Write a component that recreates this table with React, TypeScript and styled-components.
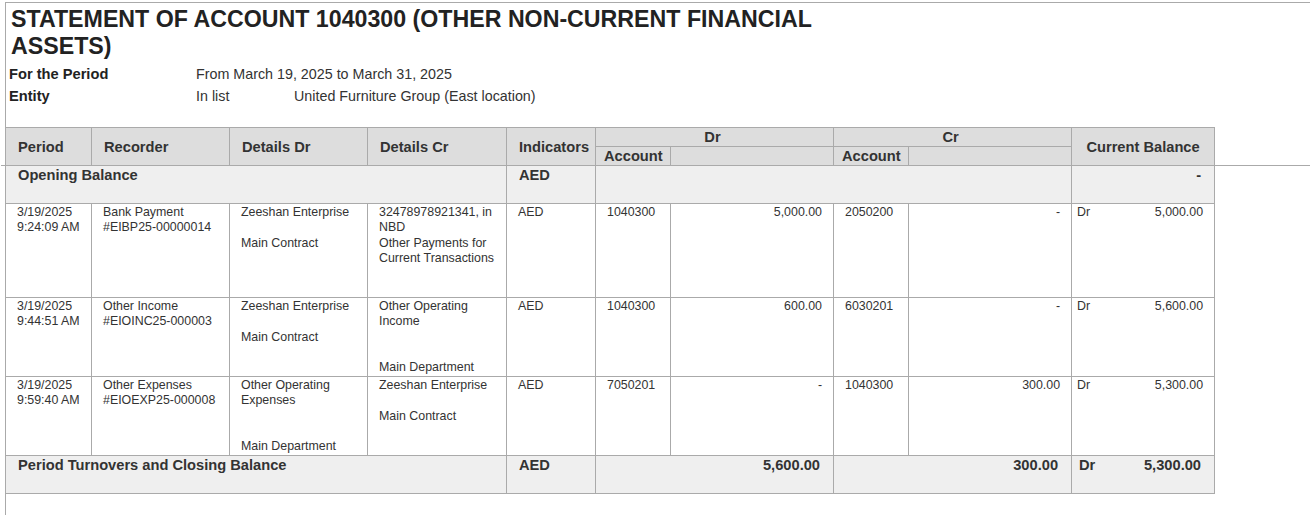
import styled, { createGlobalStyle, css } from 'styled-components';

const GlobalStyle = createGlobalStyle`
  html, body {
    margin: 0;
    padding: 0;
    background: #fff;
  }
  body {
    font-family: "Liberation Sans", Arial, sans-serif;
    color: #333;
  }
`;

const Page = styled.div`
  position: relative;
  margin: 2px 0 0 5px;
  height: 513px;
  border-top: 1px solid #aaa;
  border-left: 1px solid #aaa;
  box-sizing: border-box;
  padding-top: 3px;
`;

/* guide line of the sheet under the column headers */
const GuideLine = styled.div`
  position: absolute;
  top: 162px;
  left: -5px;
  right: 0;
  height: 1px;
  background: #aaa;
`;

const Title = styled.h1`
  margin: 0;
  padding-left: 5px;
  max-width: 840px;
  font-size: 23.2px;
  line-height: 27px;
  font-weight: bold;
  color: #222;
  text-transform: uppercase;
`;

const Meta = styled.div`
  display: grid;
  grid-template-columns: 187px 98px auto;
  grid-auto-rows: 22px;
  align-items: center;
  margin-top: 3px;
  padding-left: 3px;
  font-size: 14.3px;
  color: #333;
`;

const MetaLabel = styled.div`
  font-size: 11pt;
  font-weight: bold;
  color: #222;
`;

const MetaValue = styled.div<{ span?: number }>`
  ${(p) =>
    p.span &&
    css`
      grid-column: span ${p.span};
    `}
`;

const Table = styled.table`
  position: relative;
  z-index: 1;
  margin: 20px 0 0 -1px;
  width: 1210px;
  table-layout: fixed;
  border-collapse: collapse;
  font-size: 12.4px;
  color: #333;
`;

const Th = styled.th<{ align?: 'left' | 'center'; pad?: number }>`
  background: #ddd;
  border: 1px solid #aaa;
  height: 18px;
  padding: 0 4px 0 ${(p) => (p.pad ?? 12)}px;
  font-size: 11pt;
  font-weight: bold;
  color: #333;
  text-align: ${(p) => p.align ?? 'left'};
  vertical-align: middle;
  white-space: nowrap;
  line-height: 18px;
`;

type TdProps = {
  align?: 'left' | 'right';
  bold?: boolean;
  shade?: boolean;
  h?: number;
};

const Td = styled.td<TdProps>`
  border: 1px solid #aaa;
  background: ${(p) => (p.shade ? '#efefef' : '#fff')};
  height: ${(p) => p.h ?? 37}px;
  padding: ${(p) => (p.bold ? '0 13px 0 12px' : '1px 11px 0 11px')};
  vertical-align: top;
  text-align: ${(p) => p.align ?? 'left'};
  line-height: 15.3px;
  white-space: nowrap;
  ${(p) =>
    p.bold &&
    css`
      font-size: 11pt;
      font-weight: bold;
      line-height: 18px;
    `}
`;

const BalanceTd = styled(Td)`
  padding-left: ${(p) => (p.bold ? 7 : 5)}px;
`;

const Balance = styled.div`
  display: flex;
  justify-content: space-between;
`;

const Line = styled.div`
  min-height: 15.3px;
`;

type Entry = {
  date: string;
  time: string;
  recorder: string[];
  dr: string[];
  cr: string[];
  drAccount: string;
  drAmount: string;
  crAccount: string;
  crAmount: string;
  balance: string;
  height: number;
};

const entries: Entry[] = [
  {
    date: '3/19/2025',
    time: '9:24:09 AM',
    recorder: ['Bank Payment', '#EIBP25-00000014'],
    dr: ['Zeeshan Enterprise', '', 'Main Contract'],
    cr: ['32478978921341, in', 'NBD', 'Other Payments for', 'Current Transactions'],
    drAccount: '1040300',
    drAmount: '5,000.00',
    crAccount: '2050200',
    crAmount: '-',
    balance: '5,000.00',
    height: 92,
  },
  {
    date: '3/19/2025',
    time: '9:44:51 AM',
    recorder: ['Other Income', '#EIOINC25-000003'],
    dr: ['Zeeshan Enterprise', '', 'Main Contract'],
    cr: ['Other Operating', 'Income', '', '', 'Main Department'],
    drAccount: '1040300',
    drAmount: '600.00',
    crAccount: '6030201',
    crAmount: '-',
    balance: '5,600.00',
    height: 77,
  },
  {
    date: '3/19/2025',
    time: '9:59:40 AM',
    recorder: ['Other Expenses', '#EIOEXP25-000008'],
    dr: ['Other Operating', 'Expenses', '', '', 'Main Department'],
    cr: ['Zeeshan Enterprise', '', 'Main Contract'],
    drAccount: '7050201',
    drAmount: '-',
    crAccount: '1040300',
    crAmount: '300.00',
    balance: '5,300.00',
    height: 77,
  },
];

const Lines = ({ items }: { items: string[] }) => (
  <>
    {items.map((text, i) => (
      <Line key={'line-' + i}>{text}</Line>
    ))}
  </>
);

const columns = [86, 138, 138, 139, 89, 75, 163, 75, 163, 143];

export default function App() {
  return (
    <>
      <GlobalStyle />
      <Page>
        <GuideLine />
        <Title>Statement of Account 1040300 (Other Non-Current Financial Assets)</Title>
        <Meta>
          <MetaLabel>For the Period</MetaLabel>
          <MetaValue span={2}>From March 19, 2025 to March 31, 2025</MetaValue>
          <MetaLabel>Entity</MetaLabel>
          <MetaValue>In list</MetaValue>
          <MetaValue>United Furniture Group (East location)</MetaValue>
        </Meta>
        <Table>
          <colgroup>
            {columns.map((w, i) => (
              <col key={'col-' + i} style={{ width: w }} />
            ))}
          </colgroup>
          <thead>
            <tr>
              <Th rowSpan={2}>Period</Th>
              <Th rowSpan={2}>Recorder</Th>
              <Th rowSpan={2}>Details Dr</Th>
              <Th rowSpan={2}>Details Cr</Th>
              <Th rowSpan={2}>Indicators</Th>
              <Th colSpan={2} align="center" pad={0}>
                Dr
              </Th>
              <Th colSpan={2} align="center" pad={0}>
                Cr
              </Th>
              <Th rowSpan={2} align="center" pad={4}>
                Current Balance
              </Th>
            </tr>
            <tr>
              <Th pad={8}>Account</Th>
              <Th />
              <Th pad={8}>Account</Th>
              <Th />
            </tr>
          </thead>
          <tbody>
            <tr>
              <Td colSpan={4} bold shade>
                Opening Balance
              </Td>
              <Td bold shade>
                AED
              </Td>
              <Td colSpan={4} bold shade />
              <Td bold shade align="right">
                -
              </Td>
            </tr>
            {entries.map((e) => (
              <tr key={e.time}>
                <Td h={e.height}>
                  <Lines items={[e.date, e.time]} />
                </Td>
                <Td h={e.height}>
                  <Lines items={e.recorder} />
                </Td>
                <Td h={e.height}>
                  <Lines items={e.dr} />
                </Td>
                <Td h={e.height}>
                  <Lines items={e.cr} />
                </Td>
                <Td h={e.height}>AED</Td>
                <Td h={e.height}>{e.drAccount}</Td>
                <Td h={e.height} align="right">
                  {e.drAmount}
                </Td>
                <Td h={e.height}>{e.crAccount}</Td>
                <Td h={e.height} align="right">
                  {e.crAmount}
                </Td>
                <BalanceTd h={e.height}>
                  <Balance>
                    <span>Dr</span>
                    <span>{e.balance}</span>
                  </Balance>
                </BalanceTd>
              </tr>
            ))}
            <tr>
              <Td colSpan={4} bold shade>
                Period Turnovers and Closing Balance
              </Td>
              <Td bold shade>
                AED
              </Td>
              <Td colSpan={2} bold shade align="right">
                5,600.00
              </Td>
              <Td colSpan={2} bold shade align="right">
                300.00
              </Td>
              <BalanceTd bold shade>
                <Balance>
                  <span>Dr</span>
                  <span>5,300.00</span>
                </Balance>
              </BalanceTd>
            </tr>
          </tbody>
        </Table>
      </Page>
    </>
  );
}
